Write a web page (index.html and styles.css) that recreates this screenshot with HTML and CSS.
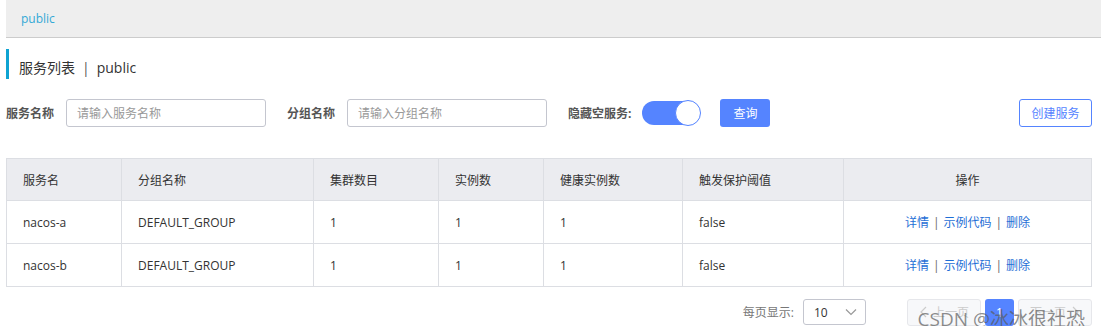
FILE: index.html
```html
<!DOCTYPE html>
<html>
    <head>
        <meta charset="utf-8" />
        <title>服务列表 | public</title>
        <link rel="stylesheet" href="styles.css">
    </head>
    <body>
        <!-- 命名空间 -->
        <div class="ns-bar"><span class="ns-name">public</span></div>

        <div class="main">
            <!-- 标题 -->
            <h2 class="page-title">服务列表<span class="sep">|</span>public</h2>

            <!-- 查询条件 -->
            <div class="search-row">
                <label class="field-label">服务名称</label>
                <input class="text-input" type="text" placeholder="请输入服务名称">
                <label class="field-label gap">分组名称</label>
                <input class="text-input" type="text" placeholder="请输入分组名称">
                <label class="field-label gap tight">隐藏空服务:</label>
                <span class="switch on"><span class="knob"></span></span>
                <button class="btn primary">查询</button>
                <button class="btn outline create">创建服务</button>
            </div>

            <!-- 服务列表 -->
            <table class="service-table">
                <colgroup>
                    <col style="width:115px">
                    <col style="width:192px">
                    <col style="width:125px">
                    <col style="width:105px">
                    <col style="width:139px">
                    <col style="width:161px">
                    <col>
                </colgroup>
                <thead>
                    <tr>
                        <th>服务名</th>
                        <th>分组名称</th>
                        <th>集群数目</th>
                        <th>实例数</th>
                        <th>健康实例数</th>
                        <th>触发保护阈值</th>
                        <th class="center">操作</th>
                    </tr>
                </thead>
                <tbody>
                    <tr>
                        <td>nacos-a</td>
                        <td>DEFAULT_GROUP</td>
                        <td>1</td>
                        <td>1</td>
                        <td>1</td>
                        <td>false</td>
                        <td class="center"><a>详情</a><span class="bar">|</span><a>示例代码</a><span class="bar">|</span><a>删除</a></td>
                    </tr>
                    <tr>
                        <td>nacos-b</td>
                        <td>DEFAULT_GROUP</td>
                        <td>1</td>
                        <td>1</td>
                        <td>1</td>
                        <td>false</td>
                        <td class="center"><a>详情</a><span class="bar">|</span><a>示例代码</a><span class="bar">|</span><a>删除</a></td>
                    </tr>
                </tbody>
            </table>

            <!-- 分页 -->
            <div class="pager">
                <span class="pager-label">每页显示:</span>
                <span class="page-size">10
                    <svg width="14" height="14" viewBox="0 0 14 14"><path d="M2 4.5 L7 9.5 L12 4.5" fill="none" stroke="#999" stroke-width="1.2"/></svg>
                </span>
                <span class="page-btn prev">
                    <svg width="10" height="12" viewBox="0 0 10 12"><path d="M7 1 L2 6 L7 11" fill="none" stroke="#ccc" stroke-width="1.2"/></svg>
                    上一页
                </span>
                <span class="page-num">1</span>
                <span class="page-btn next">下一页
                    <svg width="10" height="12" viewBox="0 0 10 12"><path d="M3 1 L8 6 L3 11" fill="none" stroke="#ccc" stroke-width="1.2"/></svg>
                </span>
                <span class="watermark">CSDN @冰冰很社恐</span>
            </div>
        </div>
    </body>
</html>
```

FILE: styles.css
```css
/* 全局 */
body {
    margin: 0;
    font-family: "Open Sans", "Noto Sans CJK SC", sans-serif;
    font-size: 12px;
    color: #333;
    background-color: white;
}

/* 顶部命名空间条 */
.ns-bar {
    margin-left: 6px;
    height: 37px;
    line-height: 37px;
    padding-left: 15px;
    background-color: #eee;
    border-bottom: 1px solid #ccc;
}

.ns-name {
    color: #33a9d6;
    font-size: 12px;
}

.main {
    padding: 0 9px 0 6px;
}

/* 标题 */
h2.page-title {
    margin: 11px 0 0 0;
    height: 30px;
    line-height: 38px;
    border-left: 3px solid #0ea3d2;
    padding-left: 10px;
    font-size: 14px;
    font-weight: normal;
    color: #333;
}

.page-title .sep {
    margin: 0 7px;
    color: #555;
}

/* 查询条件 */
.search-row {
    display: flex;
    align-items: center;
    margin-top: 20px;
    height: 28px;
}

.field-label {
    font-weight: bold;
    color: #555;
    margin-right: 12px;
}

.field-label.gap {
    margin-left: 21px;
}

.field-label.tight {
    margin-right: 11px;
}

.text-input {
    width: 200px;
    height: 28px;
    box-sizing: border-box;
    border: 1px solid #c4c6cf;
    border-radius: 3px;
    padding: 0 10px;
    font-family: inherit;
    font-size: 12px;
    color: #333;
}

.text-input::placeholder {
    color: #999;
}

/* 开关 */
.switch {
    position: relative;
    display: inline-block;
    width: 58px;
    height: 24px;
    border-radius: 12px;
    background-color: #5584ff;
}

.switch .knob {
    position: absolute;
    top: -1px;
    right: -1px;
    width: 24px;
    height: 24px;
    border: 1px solid #5584ff;
    border-radius: 50%;
    background-color: white;
}

/* 按钮 */
.btn {
    height: 28px;
    box-sizing: border-box;
    border-radius: 3px;
    font-family: inherit;
    font-size: 12px;
    cursor: pointer;
}

.btn.primary {
    width: 50px;
    margin-left: 20px;
    border: none;
    background-color: #5584ff;
    color: white;
}

.btn.outline {
    width: 73px;
    border: 1px solid #5584ff;
    background-color: white;
    color: #5584ff;
}

.btn.create {
    margin-left: auto;
}

/* 表格 */
.service-table {
    margin-top: 31px;
    width: 100%;
    border-collapse: collapse;
    table-layout: fixed;
}

.service-table th,
.service-table td {
    border: 1px solid #dcdee3;
    padding: 0 16px;
    text-align: left;
    font-weight: normal;
    color: #333;
}

.service-table th {
    height: 41px;
    background-color: #ebecf0;
}

.service-table td {
    height: 42px;
}

.service-table .center {
    text-align: center;
}

.service-table a {
    color: #1f6fd6;
    cursor: pointer;
}

.service-table .bar {
    margin: 0 4px;
    color: #666;
}

/* 分页 */
.pager {
    position: relative;
    display: flex;
    justify-content: flex-end;
    align-items: center;
    margin-top: 11px;
    height: 28px;
}

.pager-label {
    color: #777;
    margin-right: 9px;
}

.page-size {
    display: flex;
    align-items: center;
    justify-content: space-between;
    width: 63px;
    height: 26px;
    box-sizing: border-box;
    padding: 0 7px 0 10px;
    border: 1px solid #c4c6cf;
    border-radius: 3px;
    margin-right: 41px;
}

.page-btn {
    display: flex;
    align-items: center;
    justify-content: center;
    gap: 4px;
    width: 74px;
    height: 27px;
    box-sizing: border-box;
    border: 1px solid #e6e7eb;
    border-radius: 3px;
    background-color: #f7f8fa;
    color: #ccc;
}

.page-num {
    width: 29px;
    height: 27px;
    line-height: 27px;
    margin: 0 4px;
    border-radius: 3px;
    background-color: #5584ff;
    color: white;
    text-align: center;
}

/* 水印 */
.watermark {
    position: absolute;
    right: 7px;
    top: 6px;
    font-size: 19px;
    color: rgba(90, 90, 90, 0.7);
    white-space: nowrap;
}
```
